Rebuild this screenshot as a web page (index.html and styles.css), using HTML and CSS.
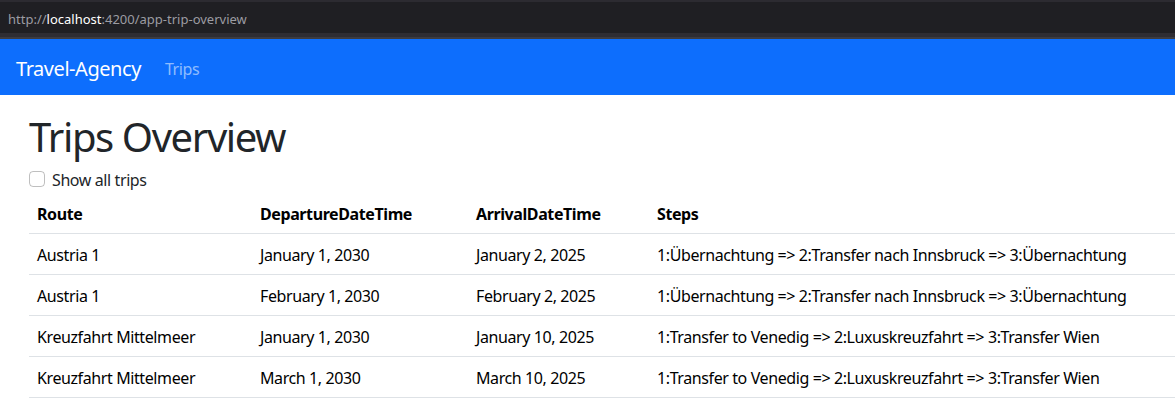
FILE: index.html
```html
<!DOCTYPE html>
<html lang="en">
<head>
<meta charset="utf-8">
<title>Travel-Agency</title>
<link rel="stylesheet" href="styles.css">
</head>
<body>
<div class="browser-bar">
  <span class="url">http://<span class="host">localhost</span>:4200/app-trip-overview</span>
</div>
<div class="browser-line"></div>
<nav class="navbar">
  <a class="brand">Travel-Agency</a>
  <a class="nav-link">Trips</a>
</nav>
<main class="container">
  <h1 class="title">Trips Overview</h1>
  <label class="form-check">
    <span class="check-box"></span>
    <span class="check-label">Show all trips</span>
  </label>
  <table class="trips">
    <colgroup>
      <col class="c-route">
      <col class="c-dep">
      <col class="c-arr">
      <col>
    </colgroup>
    <thead>
      <tr><th>Route</th><th>DepartureDateTime</th><th>ArrivalDateTime</th><th>Steps</th></tr>
    </thead>
    <tbody>
      <tr><td>Austria 1</td><td>January 1, 2030</td><td>January 2, 2025</td><td>1:Übernachtung =&gt; 2:Transfer nach Innsbruck =&gt; 3:Übernachtung</td></tr>
      <tr><td>Austria 1</td><td>February 1, 2030</td><td>February 2, 2025</td><td>1:Übernachtung =&gt; 2:Transfer nach Innsbruck =&gt; 3:Übernachtung</td></tr>
      <tr><td>Kreuzfahrt Mittelmeer</td><td>January 1, 2030</td><td>January 10, 2025</td><td>1:Transfer to Venedig =&gt; 2:Luxuskreuzfahrt =&gt; 3:Transfer Wien</td></tr>
      <tr><td>Kreuzfahrt Mittelmeer</td><td>March 1, 2030</td><td>March 10, 2025</td><td>1:Transfer to Venedig =&gt; 2:Luxuskreuzfahrt =&gt; 3:Transfer Wien</td></tr>
    </tbody>
  </table>
</main>
</body>
</html>
```
FILE: styles.css
```css
html, body {
  margin: 0;
  padding: 0;
  background: #fff;
  overflow: hidden;
}
body {
  font-family: "Noto Sans", "Open Sans", sans-serif;
  font-size: 16px;
  line-height: 24px;
  color: #212529;
  letter-spacing: -0.4px;
}
.browser-bar {
  height: 31px;
  border-top: 2px solid #2c2b31;
  border-bottom: 4px solid #2e2d33;
  background: #1f1f23;
  display: flex;
  align-items: center;
  padding-left: 8px;
}
.url {
  font-family: "Noto Sans", sans-serif;
  font-size: 13px;
  color: #9c9ca2;
  letter-spacing: 0;
  padding-top: 2px;
}
.host { color: #fff; }
.browser-line {
  height: 2px;
  background: #3c3c41;
}
.navbar {
  height: 56px;
  background: #0d6efd;
  display: flex;
  align-items: center;
  padding: 0 16px;
  box-sizing: border-box;
}
.brand {
  font-size: 20px;
  line-height: 30px;
  color: #fff;
  margin-right: 16px;
  letter-spacing: -0.45px;
  padding-top: 3px;
}
.nav-link {
  font-size: 16px;
  color: rgba(255,255,255,0.55);
  padding: 10px 8px 6px;
}
.container {
  padding: 18px 0 0 29px;
}
.title {
  font-size: 40px;
  line-height: 48px;
  font-weight: 400;
  margin: 0 0 6px;
  color: #212529;
  letter-spacing: -1.4px;
}
.form-check {
  display: flex;
  align-items: center;
  height: 24px;
  margin-bottom: 2px;
}
.check-box {
  width: 16px;
  height: 16px;
  box-sizing: border-box;
  border: 1px solid rgba(0,0,0,0.25);
  border-radius: 4px;
  margin-right: 7px;
}
.check-label {
  padding-top: 2px;
}
.trips {
  width: 100%;
  border-collapse: collapse;
  table-layout: fixed;
  color: #000;
}
.c-route { width: 223px; }
.c-dep { width: 216px; }
.c-arr { width: 181px; }
.trips th, .trips td {
  text-align: left;
  padding: 9px 8px 7px;
  border-bottom: 1px solid #dee2e6;
  white-space: nowrap;
  overflow: visible;
}
.trips th { font-weight: 700; }
```
